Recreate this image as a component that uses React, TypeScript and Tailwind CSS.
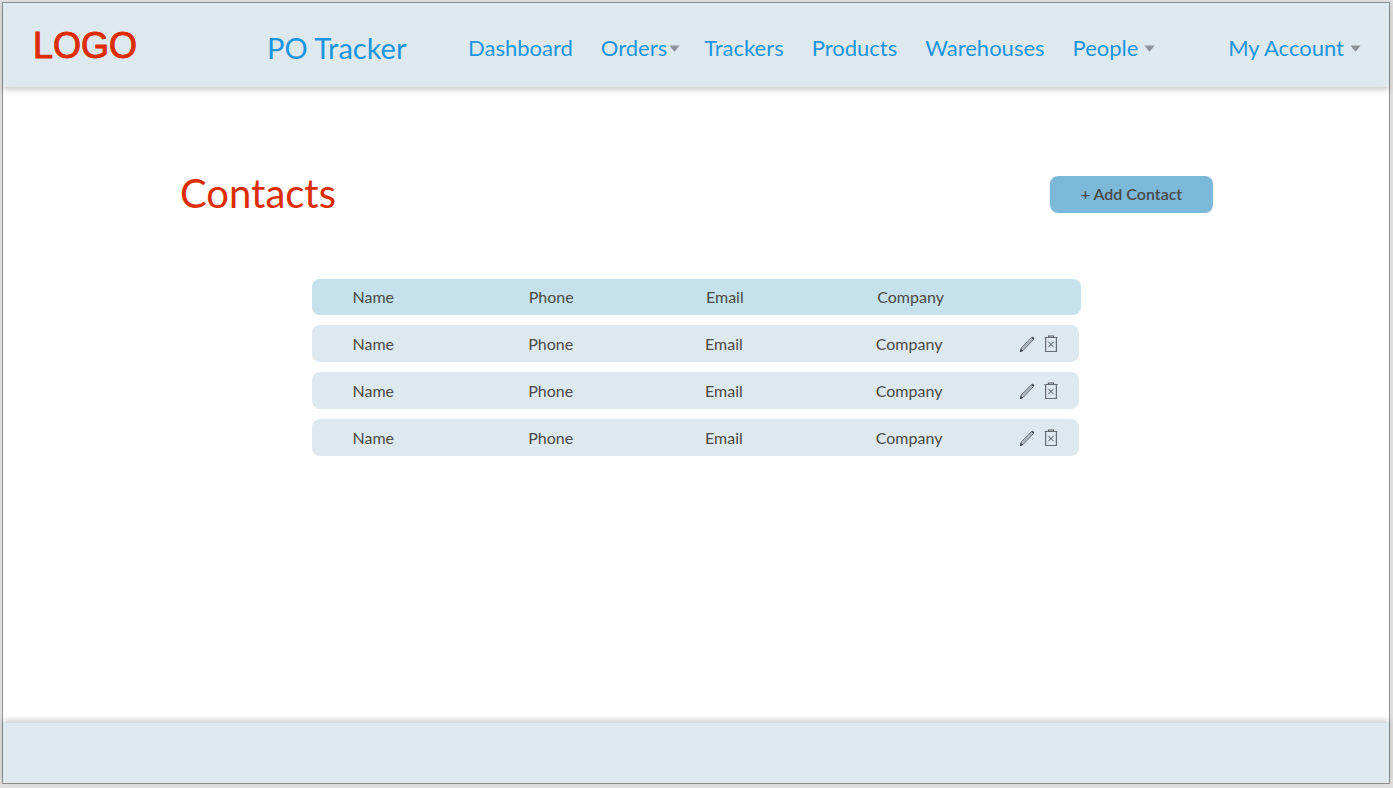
import React from "react";

const contacts = [1, 2, 3].map((id) => ({
  id,
  name: "Name",
  phone: "Phone",
  email: "Email",
  company: "Company",
}));

const rowGrid =
  "grid grid-cols-[176fr_177fr_171fr_142fr_61fr] items-center rounded-lg pl-[41px]";

function Caret() {
  return (
    <svg width="11" height="7" viewBox="0 0 11 7" className="shrink-0" aria-hidden="true">
      <path d="M0.4 .4H10.6L6.2 6.1Q5.5 6.9 4.8 6.1Z" fill="#8c9398" />
    </svg>
  );
}

function PencilIcon() {
  return (
    <svg width="16" height="17" viewBox="0 0 16 17" fill="none" aria-hidden="true">
      <path d="M1.2 15.6L2.3 11.9L12.4 1.6Q13.4 .9 14.3 1.6Q15.1 2.5 14.4 3.6L4.4 14.2Z" fill="#b9c2c7" stroke="#6a7277" strokeWidth="1" strokeLinejoin="round" />
      <path d="M3.6 12.9L13 3.3" stroke="#8a9297" strokeWidth=".6" />
      <path d="M1 16L1.9 12.8L4 14.9Z" fill="#33383b" />
      <path d="M12.3 1.8Q13.4 .8 14.4 1.6Q15.2 2.6 14.2 3.7Z" fill="#33383b" />
    </svg>
  );
}

function TrashIcon() {
  return (
    <svg width="14" height="18" viewBox="0 0 14 18" fill="none" aria-hidden="true">
      <path d="M0.5 2.5H13.5" stroke="#656c70" />
      <path d="M4.5 2V1H9.5V2" stroke="#50575b" strokeWidth="1.2" />
      <path d="M1.6 2.5V16.5H12.4V2.5" stroke="#656c70" strokeWidth="1.2" strokeLinejoin="round" />
      <path d="M4.3 6.8L9.7 12.2M9.7 6.8L4.3 12.2" stroke="#4a5155" strokeWidth="1" />
    </svg>
  );
}

export default function App() {
  return (
    <div className="flex min-h-screen flex-col bg-[#dedede] pt-0.5 pr-[3px] pb-1 pl-0.5 font-['Lato',sans-serif] text-[#4a4a4a]">
      <div className="flex grow flex-col border border-[#929292] bg-white">
        <header className="flex h-[84px] shrink-0 items-center bg-[#dee9ef] pt-1.5 pr-7 pl-[30px] whitespace-nowrap text-[#1b95e0] shadow-[0_3px_6px_rgba(0,0,0,0.2)]">
          <a
            href="#home"
            className="w-[234px] pb-1 font-['Liberation_Sans',sans-serif] text-[36px] leading-10 text-[#dc2c00] [-webkit-text-stroke:1px_#dc2c00]"
          >
            LOGO
          </a>
          <a href="#tracker" className="w-[201px] text-[29px] leading-9">
            PO Tracker
          </a>
          <nav aria-label="Main" className="flex grow items-center gap-7 text-[22px] leading-7">
            <a href="#dashboard">Dashboard</a>
            <button type="button" className="-mr-1 flex items-center gap-0.5">
              Orders
              <Caret />
            </button>
            <a href="#trackers">Trackers</a>
            <a href="#products">Products</a>
            <a href="#warehouses">Warehouses</a>
            <button type="button" className="flex items-center gap-1.5">
              People
              <Caret />
            </button>
            <button type="button" className="ml-auto flex items-center gap-1.5">
              My Account
              <Caret />
            </button>
          </nav>
        </header>

        <main className="grow px-[176px] pt-[82px]">
          <div className="flex items-center justify-between">
            <h1 className="pb-0.5 pl-px text-[40px] leading-[48px] text-[#dc2c00]">Contacts</h1>
            <button
              type="button"
              className="h-[37px] w-[163px] rounded-lg bg-[#7cb8d8] text-base font-semibold"
            >
              + Add Contact
            </button>
          </div>

          <table className="mx-auto mt-[60px] block max-w-[769px] text-base">
            <thead className="block">
              <tr className={`${rowGrid} h-9 bg-[#c4e1ec] text-left`}>
                <th className="font-normal">Name</th>
                <th className="font-normal">Phone</th>
                <th className="font-normal">Email</th>
                <th className="font-normal">Company</th>
                <td />
              </tr>
            </thead>
            <tbody className="mt-2.5 flex flex-col gap-2.5 pr-0.5">
              {contacts.map((c) => (
                <tr key={c.id} className={`${rowGrid} h-[37px] bg-[#dee9ef]`}>
                  <td>{c.name}</td>
                  <td>{c.phone}</td>
                  <td>{c.email}</td>
                  <td>{c.company}</td>
                  <td className="flex items-center gap-[9px] pt-px pl-px">
                    <button type="button" aria-label="Edit contact">
                      <PencilIcon />
                    </button>
                    <button type="button" aria-label="Delete contact">
                      <TrashIcon />
                    </button>
                  </td>
                </tr>
              ))}
            </tbody>
          </table>
        </main>

        <footer className="h-[60px] shrink-0 bg-[#dee9ef] shadow-[0_-3px_6px_rgba(0,0,0,0.2)]" />
      </div>
    </div>
  );
}
